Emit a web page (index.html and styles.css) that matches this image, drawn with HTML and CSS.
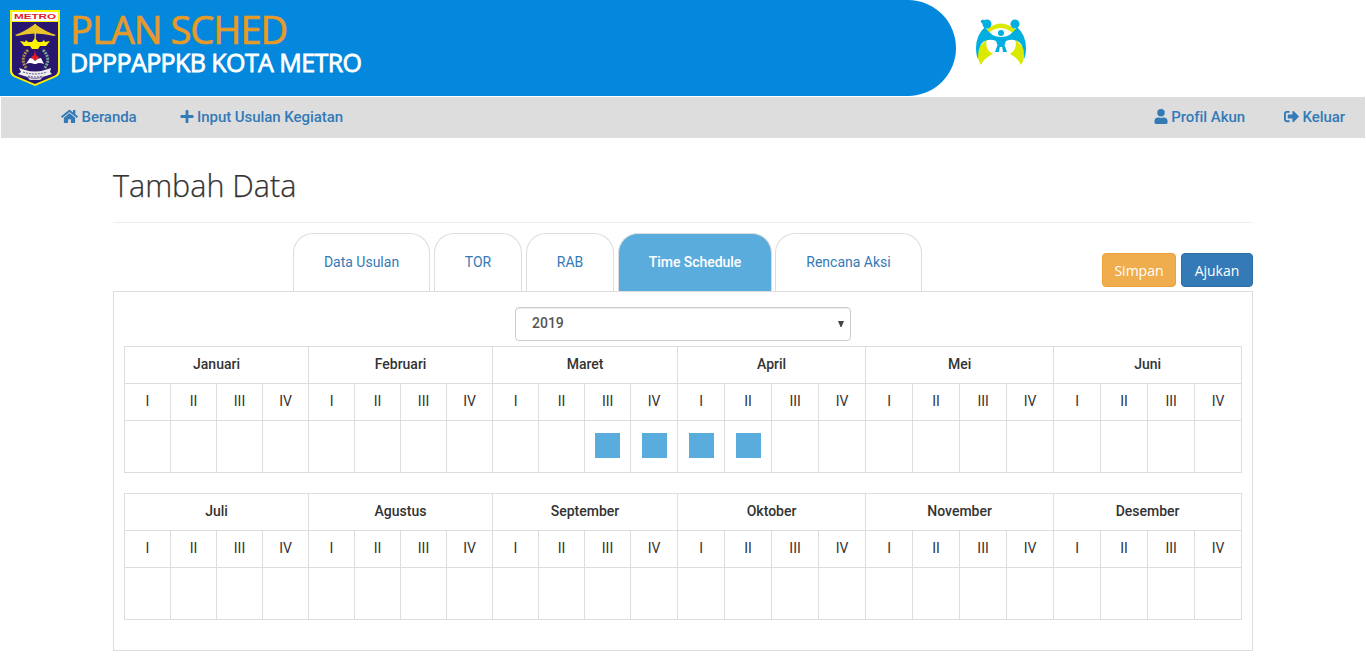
FILE: index.html
```html
<!DOCTYPE html>
<html lang="id">
<head>
<meta charset="utf-8">
<title>Plan Sched</title>
<link rel="stylesheet" href="styles.css">
</head>
<body>
<header class="header">
  <div class="brand">
    <svg class="emblem" width="50" height="76" viewBox="0 0 50 76">
      <path d="M0 0H50V61Q50 65 46 67L25 76L4 67Q0 65 0 61Z" fill="#fff200"/>
      <path d="M2 12H48V60Q48 64 44 66L25 74L6 66Q2 64 2 60Z" fill="#29166f"/>
      <rect x="2" y="2" width="46" height="9" fill="#fff"/>
      <text class="emblem-name" x="25" y="9.3" text-anchor="middle" textLength="42" lengthAdjust="spacingAndGlyphs">METRO</text>
      <path d="M5 25Q14 22 25 14Q36 22 46 25L44 26Q25 21 7 26Z" fill="#e9c52b"/>
      <path d="M24.500 14h1.500v17h-1.500z" fill="#e8cd25"/>
      <path d="M10 31l5 1 1-2 2 2 4 0 3-4 3 4 4 0 2-2 1 2 5-1-4 5H30l-2 3h-6l-2-3h-6z" fill="#fff200"/>
      <path d="M18 40Q9 49 17 59" fill="none" stroke="#a98d48" stroke-width="3" stroke-dasharray="2 1"/>
      <path d="M33 40Q42 49 34 59" fill="none" stroke="#78a690" stroke-width="3" stroke-dasharray="2 1"/>
      <path d="M25 40l1 5 3 2-2 3h-4l-2-3 3-2z" fill="#e21b22"/>
      <path d="M20 48q3 0 5 3 3-3 6-3l3 6q-5-2-8 0h-2q-4-2-8 0z" fill="#fff"/>
      <path d="M9 58l6 2q10 3 20 0l6-2-1 4 2 2-6 2q-11 4-22 0l-6-2 3-2z" fill="#eee"/>
      <path d="M13 62q12 4 24 0M18 66q7 2 15 0" fill="none" stroke="#625587" stroke-width="1" stroke-dasharray="2 1"/>
      <path d="M17 67q8 3 16 0l-3 3H20z" fill="#d7d4df"/>
    </svg>
    <div class="brand-text">
      <div class="brand-title">PLAN SCHED</div>
      <div class="brand-sub">DPPPAPPKB KOTA METRO</div>
    </div>
  </div>
  <svg class="family" width="52" height="48" viewBox="0 0 52 48">
    <path d="M10 12Q26-3 42 12L39 15Q26 3 12 15Z" fill="#dbe900"/>
    <path d="M4 28L12 20Q9 30 18 35Q9 39 6 46Q0 36 4 28M48 28L40 20Q43 30 35 35Q43 39 46 46Q52 36 48 28Z" fill="#dbe900"/>
    <path d="M10 8Q16 18 26 18Q36 18 42 8Q51 16 51 29Q51 36 49 40Q50 24 41 21.500Q36 20 31 22L29.500 26L32 33H28L27.200 28H24.800L24 33H20L22.500 26L21 22Q16 20 11 21.500Q3 24 3 40Q1 36 1 29Q1 16 10 8Z" fill="#00aedf"/>
    <circle cx="12" cy="5" r="4.500" fill="#00aedf"/>
    <path d="M10 1Q6 0 6 2Q5 3 8 5L10 7Z" fill="#00aedf"/>
    <circle cx="40" cy="5" r="4.500" fill="#00aedf"/>
    <circle cx="26" cy="14" r="3" fill="#00aedf"/>
  </svg>
</header>

<nav class="nav">
  <a class="nav-link home"><svg width="17" height="15" viewBox="0 0 576 512"><path d="M280 149L96 300v164a16 16 0 0 0 16 16h112a16 16 0 0 0 16-16v-96a16 16 0 0 1 16-16h64a16 16 0 0 1 16 16v96a16 16 0 0 0 16 16h112a16 16 0 0 0 16-16V300L296 149a12 12 0 0 0-16 0zM572 251l-84-69V44a12 12 0 0 0-12-12h-56a12 12 0 0 0-12 12v72l-89-74a48 48 0 0 0-62 0L4 251a12 12 0 0 0-1 17l25 31a12 12 0 0 0 17 2L280 107a12 12 0 0 1 16 0l235 194a12 12 0 0 0 17-2l25-31a12 12 0 0 0-1-17z"/></svg><span>Beranda</span></a>
  <a class="nav-link"><svg width="14" height="15" viewBox="0 0 448 512"><path d="M416 208H272V64a32 32 0 0 0-32-32h-32a32 32 0 0 0-32 32v144H32a32 32 0 0 0-32 32v32a32 32 0 0 0 32 32h144v144a32 32 0 0 0 32 32h32a32 32 0 0 0 32-32V304h144a32 32 0 0 0 32-32v-32a32 32 0 0 0-32-32z"/></svg><span>Input Usulan Kegiatan</span></a>
  <a class="nav-link account"><svg width="14" height="15" viewBox="0 0 448 512"><path d="M224 256a128 128 0 1 0 0-256 128 128 0 1 0 0 256zm90 32h-17a174 174 0 0 1-146 0h-17A134 134 0 0 0 0 422v42a48 48 0 0 0 48 48h352a48 48 0 0 0 48-48v-42a134 134 0 0 0-134-134z"/></svg><span>Profil Akun</span></a>
  <a class="nav-link"><svg width="15" height="15" viewBox="0 0 512 512"><path d="M497 273L329 441c-15 15-41 4.500-41-17v-96H152a24 24 0 0 1-24-24v-96a24 24 0 0 1 24-24h136V88c0-21 26-32 41-17l168 168a24 24 0 0 1 0 34zM192 436v-40a12 12 0 0 0-12-12H96a32 32 0 0 1-32-32V160a32 32 0 0 1 32-32h84a12 12 0 0 0 12-12V76a12 12 0 0 0-12-12H96a96 96 0 0 0-96 96v192a96 96 0 0 0 96 96h84a12 12 0 0 0 12-12z"/></svg><span>Keluar</span></a>
</nav>

<main class="container">
  <h1 class="page-title">Tambah Data</h1>
  <div class="toolbar">
    <div class="tabs">
      <a class="tab tab-usulan">Data Usulan</a>
      <a class="tab tab-tor">TOR</a>
      <a class="tab tab-rab">RAB</a>
      <a class="tab tab-schedule active">Time Schedule</a>
      <a class="tab tab-aksi">Rencana Aksi</a>
    </div>
    <div class="actions">
      <button class="btn btn-save">Simpan</button>
      <button class="btn btn-submit">Ajukan</button>
    </div>
  </div>
  <section class="panel">
    <div class="year"><span>2019</span><svg width="6" height="6" viewBox="0 0 6 6"><path d="M0 0H6L3.500 6H2.500Z"/></svg></div>
    <table class="schedule">
      <colgroup><col class="narrow" span="11"><col class="wide" span="13"></colgroup>
      <tr class="months"><th colspan="4">Januari</th><th colspan="4">Februari</th><th colspan="4">Maret</th><th colspan="4">April</th><th colspan="4">Mei</th><th colspan="4">Juni</th></tr>
      <tr class="weeks"><td>I</td><td>II</td><td>III</td><td>IV</td><td>I</td><td>II</td><td>III</td><td>IV</td><td>I</td><td>II</td><td>III</td><td>IV</td><td>I</td><td>II</td><td>III</td><td>IV</td><td>I</td><td>II</td><td>III</td><td>IV</td><td>I</td><td>II</td><td>III</td><td>IV</td></tr>
      <tr class="marks"><td></td><td></td><td></td><td></td><td></td><td></td><td></td><td></td><td></td><td></td><td><i class="mark"></i></td><td><i class="mark"></i></td><td><i class="mark"></i></td><td><i class="mark"></i></td><td></td><td></td><td></td><td></td><td></td><td></td><td></td><td></td><td></td><td></td></tr>
    </table>
    <table class="schedule">
      <colgroup><col class="narrow" span="11"><col class="wide" span="13"></colgroup>
      <tr class="months"><th colspan="4">Juli</th><th colspan="4">Agustus</th><th colspan="4">September</th><th colspan="4">Oktober</th><th colspan="4">November</th><th colspan="4">Desember</th></tr>
      <tr class="weeks"><td>I</td><td>II</td><td>III</td><td>IV</td><td>I</td><td>II</td><td>III</td><td>IV</td><td>I</td><td>II</td><td>III</td><td>IV</td><td>I</td><td>II</td><td>III</td><td>IV</td><td>I</td><td>II</td><td>III</td><td>IV</td><td>I</td><td>II</td><td>III</td><td>IV</td></tr>
      <tr class="marks"><td></td><td></td><td></td><td></td><td></td><td></td><td></td><td></td><td></td><td></td><td></td><td></td><td></td><td></td><td></td><td></td><td></td><td></td><td></td><td></td><td></td><td></td><td></td><td></td></tr>
    </table>
  </section>
</main>
</body>
</html>
```
FILE: styles.css
```css
* { box-sizing: border-box; }
body { margin: 0; background: #fff; color: #333; font: 14px/20px Roboto, sans-serif; overflow: hidden; }

.header { display: flex; height: 96px; }
.brand { display: flex; width: 956px; height: 96px; padding: 10px 0 0 10px; background: #0388dd; border-radius: 0 48px 48px 0; }
.emblem { flex: none; }
.emblem-name { font: bold 8px "Liberation Sans", sans-serif; fill: #e21b22; }
.brand-text { margin-left: 10px; font-family: "Open Sans", sans-serif; white-space: nowrap; }
.brand-title { font-size: 38px; line-height: 38px; letter-spacing: -.95px; color: #e69a28; -webkit-text-stroke: .7px #e69a28; }
.brand-sub { font-size: 25px; line-height: 28px; letter-spacing: -.58px; color: #fff; -webkit-text-stroke: .8px #fff; }
.family { margin: 19px 0 0 19px; }

.nav { display: flex; align-items: flex-start; height: 41px; margin: 1px 1px 0; padding: 10px 20px 0 60px; background: #ddd; }
.nav-link { display: flex; gap: 3.5px; color: #337ab7; font-size: 15px; font-weight: 500; line-height: 20px; letter-spacing: -.06px; }
.nav-link svg { margin-top: 2px; fill: #337ab7; }
.home { margin-right: 43px; }
.account { margin-left: auto; margin-right: 39px; }

.container { width: 1140px; margin: 0 auto; }
.page-title { height: 85px; margin: 0; padding-top: 27px; border-bottom: 1px solid #eee; font: 300 30.5px/40px "Open Sans", sans-serif; color: #333; -webkit-text-stroke: .25px #333; }
.toolbar { display: flex; justify-content: space-between; height: 68px; padding: 10px 0 0 180px; }
.tabs { display: flex; gap: 4px; }
.tab { height: 58px; padding-top: 18px; border: 1px solid #ddd; border-bottom: 0; border-radius: 20px 20px 0 0; color: #337ab7; text-align: center; }
.tab-usulan { width: 137px; }
.tab-tor, .tab-rab { width: 88px; }
.tab-schedule { width: 154px; }
.tab-aksi { width: 147px; margin-left: -1px; }
.tab.active { background: #5aacdc; color: #fff; font-weight: 500; letter-spacing: -.05px; }
.actions { display: flex; gap: 5px; padding-top: 20px; }
.btn { height: 34px; padding: 1px 0 0; border: 1px solid; border-radius: 4px; color: #fff; font: 14px/20px "Open Sans", sans-serif; }
.btn-save { width: 74px; background: #f0ad4e; border-color: #eea236; }
.btn-submit { width: 72px; background: #337ab7; border-color: #2e6da4; }

.panel { height: 360px; padding: 15px 10px; border: 1px solid #ddd; }
.year { display: flex; justify-content: space-between; align-items: center; width: 336px; height: 34px; margin: 0 auto 5px; padding: 0 6px 2px 16px; border: 1px solid #ccc; border-radius: 4px; box-shadow: inset 0 1px 1px rgba(0, 0, 0, .075); color: #555; font-weight: 500; }
.year svg { margin-top: 2px; fill: #444; }

.schedule { width: 1118px; margin-bottom: 20px; border-collapse: collapse; table-layout: fixed; }
.narrow { width: 46px; }
.wide { width: 47px; }
.schedule th, .schedule td { padding: 0 0 2px; border: 1px solid #ddd; text-align: center; vertical-align: middle; }
.schedule th { font-weight: 500; }
.months, .weeks { height: 37px; }
.marks { height: 52px; }
.mark { display: block; width: 25px; height: 25px; margin: 0 auto; background: #5aacdc; }
```
